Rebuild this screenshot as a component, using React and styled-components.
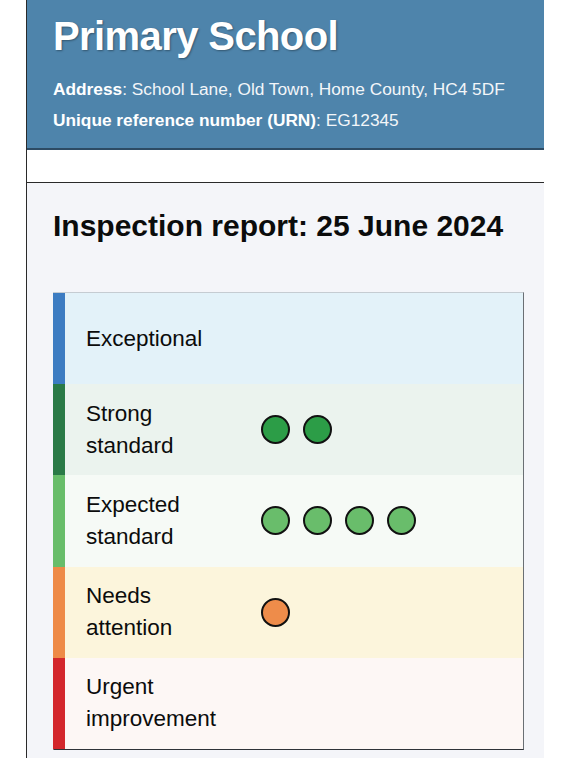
import React from 'react';
import styled, { createGlobalStyle } from 'styled-components';

const ratings = [
  { label: ['Exceptional'], bar: '#3c7cc2', bg: '#e3f2f9', dots: 0, dot: '#3c7cc2' },
  { label: ['Strong', 'standard'], bar: '#2a7a47', bg: '#ebf3ee', dots: 2, dot: '#2c9d47' },
  { label: ['Expected', 'standard'], bar: '#68bd6a', bg: '#f6faf6', dots: 4, dot: '#69bd6b' },
  { label: ['Needs', 'attention'], bar: '#ee8a47', bg: '#fcf5dc', dots: 1, dot: '#ee8c4a' },
  { label: ['Urgent', 'improvement'], bar: '#d3272c', bg: '#fdf7f5', dots: 0, dot: '#d3272c' },
];

const App = () => {
  return (
    <>
      <GlobalStyle />
      <Page>
        <Banner>
          <Title>Primary School</Title>
          <Meta><b>Address</b>: School Lane, Old Town, Home County, HC4 5DF</Meta>
          <Meta><b>Unique reference number (URN)</b>: EG12345</Meta>
        </Banner>
        <Spacer />
        <Main>
          <Heading>Inspection report: 25 June 2024</Heading>
          <Card>
            {ratings.map((r) => (
              <Row key={r.label.join(' ')} bg={r.bg} bar={r.bar}>
                <Label>
                  {r.label.map((line) => (
                    <div key={line}>{line}</div>
                  ))}
                </Label>
                <Dots>
                  {Array.from({ length: r.dots }).map((_, i) => (
                    <Dot key={i} color={r.dot} />
                  ))}
                </Dots>
              </Row>
            ))}
          </Card>
        </Main>
      </Page>
    </>
  )
}

const GlobalStyle = createGlobalStyle`
body {
  margin: 0;
  background: #ffffff;
  font-family: "Liberation Sans", Arial, sans-serif;
}
`

const Page = styled.div`
margin-left: 26px;
width: 517px;
min-height: 758px;
border-left: 1px solid #2a2a2a;
display: flex;
flex-direction: column;
background: #f4f5f9;
`

const Banner = styled.header`
background: #4e84ab;
border-bottom: 2px solid #2d4b64;
padding: 12px 0 0 26px;
box-sizing: border-box;
height: 150px;
color: #ffffff;
`

const Title = styled.h1`
margin: 0 0 14px 0;
font-size: 40px;
line-height: 48px;
font-weight: 700;
letter-spacing: -0.6px;
text-shadow: 1px 1px 2px rgba(0, 0, 0, 0.35);
`

const Meta = styled.p`
margin: 0;
font-size: 17.3px;
line-height: 31px;
color: #f3f6f9;
b {
  font-weight: 700;
  color: #ffffff;
}
`

const Spacer = styled.div`
height: 32px;
background: #ffffff;
border-bottom: 1px solid #2a2a2a;
`

const Main = styled.main`
padding: 24px 20px 8px 26px;
flex: 1;
`

const Heading = styled.h2`
margin: 0 0 47px 0;
font-size: 30px;
line-height: 38px;
font-weight: 700;
color: #0b0c0c;
`

const Card = styled.div`
border: 1px solid #c5ccd2;
border-right-color: #6a6f74;
border-bottom-color: #2f3338;
display: flex;
flex-direction: column;
`

const Row = styled.div`
display: grid;
grid-template-columns: 176px 1fr;
align-items: center;
height: 91.2px;
padding-left: 20px;
background: ${(p) => p.bg};
border-left: 12px solid ${(p) => p.bar};
margin-left: -1px;
`

const Label = styled.div`
font-size: 22.5px;
line-height: 32px;
color: #0b0c0c;
padding-left: 1px;
`

const Dots = styled.div`
display: flex;
gap: 13px;
`

const Dot = styled.span`
width: 29px;
height: 29px;
box-sizing: border-box;
border-radius: 50%;
border: 2px solid #111;
background: ${(p) => p.color};
`

export default App
